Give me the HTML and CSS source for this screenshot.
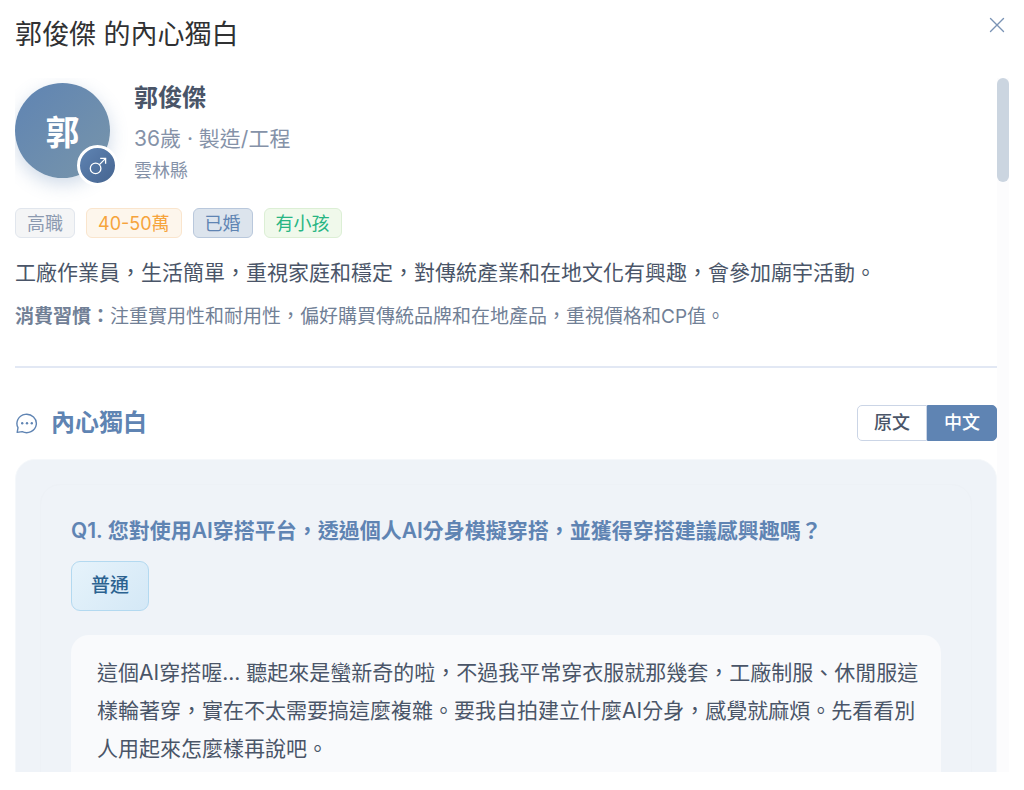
FILE: index.html
```html
<!DOCTYPE html>
<html lang="zh-Hant">
<head>
    <meta charset="UTF-8">
    <meta name="viewport" content="width=device-width, initial-scale=1.0">
    <title>郭俊傑 的內心獨白</title>
    <link rel="stylesheet" href="styles.css">
</head>
<body>
    <div class="dialog">
        <header class="dialog-header">
            <h1>郭俊傑 的內心獨白</h1>
            <button class="close-btn" type="button" aria-label="關閉">
                <svg width="16" height="16" viewBox="0 0 16 16" fill="none" stroke="currentColor" stroke-width="1.4" stroke-linecap="round">
                    <path d="M1.5 1.5l13 13M14.5 1.5l-13 13"/>
                </svg>
            </button>
        </header>

        <div class="dialog-body">
            <main class="content">
                <section class="profile">
                    <div class="profile-header">
                        <div class="avatar">
                            郭
                            <span class="gender-badge">
                                <svg width="20" height="20" viewBox="0 0 20 20" fill="none" stroke="currentColor" stroke-width="1.3">
                                    <circle cx="7.6" cy="12.4" r="5.3"/>
                                    <path d="M11.4 8.6L17.4 2.6M12.2 2.4h5.4v5.4"/>
                                </svg>
                            </span>
                        </div>
                        <div class="info">
                            <h2>郭俊傑</h2>
                            <p class="job">36歲 · 製造/工程</p>
                            <p class="city">雲林縣</p>
                        </div>
                    </div>
                    <div class="tags">
                        <span class="tag tag-info">高職</span>
                        <span class="tag tag-warning">40-50萬</span>
                        <span class="tag tag-primary">已婚</span>
                        <span class="tag tag-success">有小孩</span>
                    </div>
                    <p class="description">工廠作業員，生活簡單，重視家庭和穩定，對傳統產業和在地文化有興趣，會參加廟宇活動。</p>
                    <p class="habits"><strong>消費習慣：</strong>注重實用性和耐用性，偏好購買傳統品牌和在地產品，重視價格和CP值。</p>
                </section>

                <section class="monologue">
                    <div class="section-header">
                        <h3>
                            <svg width="24" height="24" viewBox="0 0 24 24" fill="none" stroke="currentColor" stroke-width="1.4" stroke-linejoin="round">
                                <path d="M2.2 21.4L3 16.6A9.7 9.2 0 1 1 7.2 20.6Z"/>
                                <g fill="currentColor" stroke="none">
                                    <circle cx="7.2" cy="12.2" r="1.2"/>
                                    <circle cx="12" cy="12.2" r="1.2"/>
                                    <circle cx="16.8" cy="12.2" r="1.2"/>
                                </g>
                            </svg>
                            內心獨白
                        </h3>
                        <div class="lang-switch">
                            <button type="button">原文</button>
                            <button type="button" class="active">中文</button>
                        </div>
                    </div>
                    <div class="card">
                        <article class="question">
                            <h4>Q1. 您對使用AI穿搭平台，透過個人AI分身模擬穿搭，並獲得穿搭建議感興趣嗎？</h4>
                            <span class="choice">普通</span>
                            <p class="answer">這個AI穿搭喔... 聽起來是蠻新奇的啦，不過我平常穿衣服就那幾套，工廠制服、休閒服這樣輪著穿，實在不太需要搞這麼複雜。要我自拍建立什麼AI分身，感覺就麻煩。先看看別人用起來怎麼樣再說吧。</p>
                        </article>
                    </div>
                </section>
            </main>
            <div class="scrollbar">
                <div class="scrollbar-thumb"></div>
            </div>
        </div>
    </div>
</body>
</html>
```
FILE: styles.css
```css
* {
    box-sizing: border-box;
}
body {
    margin: 0;
    background: #ffffff;
    color: #4a5568;
    font-family: Inter, "Noto Sans CJK TC", sans-serif;
}
h1, h2, h3, h4, p {
    margin: 0;
}
button {
    font-family: inherit;
    cursor: pointer;
}
.dialog {
    display: flex;
    flex-direction: column;
    height: 100vh;
    padding: 14px 15px 18px;
}
.dialog-header {
    display: flex;
    justify-content: space-between;
    align-items: flex-start;
    padding-bottom: 22px;
}
h1 {
    font-size: 27px;
    font-weight: 400;
    line-height: 42px;
    color: #303133;
}
.close-btn {
    display: flex;
    padding: 3px 4px;
    border: none;
    background: none;
    color: #7a93b5;
}

/* scrolling area */
.dialog-body {
    display: flex;
    flex: 1;
    min-height: 0;
    overflow: hidden;
}
.content {
    flex: 1;
    min-width: 0;
    padding-top: 2px;
}
.scrollbar {
    flex: 0 0 12px;
    background: #fcfcfd;
}
.scrollbar-thumb {
    height: 15%;
    border-radius: 6px;
    background: #cbd5e0;
}

/* profile */
.profile {
    padding-bottom: 33px;
    border-bottom: 2px solid #e2e8f4;
}
.profile-header {
    display: flex;
    align-items: center;
    gap: 24px;
}
.avatar {
    position: relative;
    display: flex;
    justify-content: center;
    align-items: center;
    width: 95px;
    height: 95px;
    margin-bottom: 5px;
    border-radius: 50%;
    background: linear-gradient(135deg, #5f84b3, #7895aa);
    box-shadow: 0 6px 18px rgba(95, 132, 179, 0.3);
    color: #ffffff;
    font-size: 34px;
    font-weight: 700;
}
.gender-badge {
    position: absolute;
    right: -8px;
    bottom: -8px;
    display: flex;
    justify-content: center;
    align-items: center;
    width: 41px;
    height: 41px;
    border: 3px solid #ffffff;
    border-radius: 50%;
    background: linear-gradient(135deg, #5f84b3, #456490);
}
.info h2 {
    margin-bottom: 6px;
    font-size: 24px;
    font-weight: 700;
    line-height: 36px;
}
.job {
    font-size: 21px;
    line-height: 34px;
    color: #8592a8;
}
.city {
    font-size: 18px;
    line-height: 30px;
    color: #8592a8;
}
.tags {
    display: flex;
    flex-wrap: wrap;
    gap: 11px;
    margin-top: 22px;
}
.tag {
    padding: 1px 11px 0;
    border: 1px solid;
    border-radius: 6px;
    font-size: 18px;
    line-height: 27px;
}
.tag-info {
    background: #f4f5f6;
    border-color: #e1e6ed;
    color: #8c9ab0;
}
.tag-warning {
    background: #fdf6ec;
    border-color: #fae5cd;
    color: #f6a43c;
}
.tag-primary {
    background: #dce4ed;
    border-color: #b9c8dc;
    color: #5f84b3;
}
.tag-success {
    background: #f0f9eb;
    border-color: #dcefd5;
    color: #27b583;
}
.description {
    margin-top: 17px;
    font-size: 21px;
    line-height: 36px;
}
.habits {
    margin-top: 10px;
    font-size: 19px;
    line-height: 32px;
    color: #718096;
}

/* monologue */
.section-header {
    display: flex;
    justify-content: space-between;
    align-items: center;
    margin: 37px 0 18px;
}
h3 {
    display: flex;
    align-items: center;
    gap: 12px;
    font-size: 24px;
    line-height: 36px;
    color: #5f84b3;
}
.lang-switch {
    display: flex;
}
.lang-switch button {
    padding: 0 16px;
    border: 1px solid #cbd5e6;
    border-radius: 5px 0 0 5px;
    background: #ffffff;
    color: #4a5568;
    font-size: 18px;
    font-weight: 500;
    line-height: 34px;
}
.lang-switch .active {
    border-color: #5f84b3;
    border-radius: 0 5px 5px 0;
    background: #5f84b3;
    color: #ffffff;
}
.card {
    padding: 24px;
    border: 1px solid #f5f8fb;
    border-radius: 20px;
    background: #eff3f8;
}
.question {
    padding: 29px 30px;
    border: 1px solid #edf1f6;
    border-radius: 20px;
}
h4 {
    font-size: 21px;
    font-weight: 600;
    line-height: 34px;
    color: #5f84b3;
}
.choice {
    display: inline-block;
    margin-top: 13px;
    padding: 0 19px;
    border: 1px solid #b3d9f0;
    border-radius: 9px;
    background: linear-gradient(135deg, #e6f3fb, #d4e8f6);
    color: #2b6290;
    font-size: 19px;
    font-weight: 500;
    line-height: 48px;
}
.answer {
    margin-top: 24px;
    padding: 19px 20px 26px 26px;
    border-radius: 18px;
    background: #f9fafc;
    font-size: 21px;
    line-height: 38px;
}
```
